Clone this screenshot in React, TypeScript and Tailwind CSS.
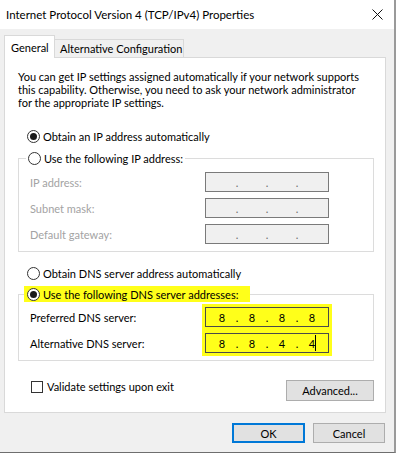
import React from "react";

function Radio({ checked }: { checked?: boolean }) {
  return (
    <span className="flex h-[13px] w-[13px] shrink-0 items-center justify-center rounded-full border border-[#333333] bg-white">
      {checked && <span className="h-[7px] w-[7px] rounded-full bg-[#1a1a1a]" />}
    </span>
  );
}

function IpBox({ values, disabled, caret }: { values?: string[]; disabled?: boolean; caret?: boolean }) {
  const cells = values ?? ["", "", "", ""];
  return (
    <div
      className={
        "relative flex h-[20px] w-[124px] items-center border px-px " +
        (disabled ? "border-[#7a7a7a] bg-[#f0f0f0] text-[#6d6d6d]" : "border-[#4a4a4a] bg-[#ffff1a] text-black")
      }
    >
      {cells.map((v, i) => (
        <React.Fragment key={i}>
          {i > 0 && <span className="flex w-0 justify-center">.</span>}
          <span className="w-[30px] text-center">{v}</span>
        </React.Fragment>
      ))}
      {caret && <span className="absolute right-[12px] top-[1px] h-[16px] w-px bg-black" />}
    </div>
  );
}

function Row({ label, disabled, children }: { label: string; disabled?: boolean; children: React.ReactNode }) {
  return (
    <div className="flex h-[20px] items-center justify-between pl-[11px] pr-[44px]">
      <span className={disabled ? "text-[#a3a3a3]" : "text-black"}>{label}</span>
      {children}
    </div>
  );
}

export default function App() {
  return (
    <div
      className="h-[455px] w-[398px] overflow-hidden whitespace-nowrap bg-white text-[11px] leading-[13px] text-black"
      style={{ fontFamily: 'Lato, "Noto Sans", sans-serif' }}
    >
      <div className="flex h-[453px] w-[396px] flex-col border-b border-r-2 border-[#6e6e6e] border-r-[#9a9a9a] bg-[#f0f0f0]">
        {/* title bar */}
        <div className="flex h-[29px] shrink-0 items-center justify-between bg-white pl-[6px] pr-[9px]">
          <span className="text-[11.5px]">Internet Protocol Version 4 (TCP/IPv4) Properties</span>
          <svg width="11" height="11" viewBox="0 0 11 11" className="mr-[2px]">
            <path d="M0.5 0.5 L10.5 10.5 M10.5 0.5 L0.5 10.5" stroke="#111" strokeWidth="1" />
          </svg>
        </div>

        <div className="pl-[4px] pr-[8px] pt-[6px]">
          {/* tabs */}
          <div className="flex items-end">
            <div className="relative -mb-px flex h-[23px] w-[51px] items-center border border-b-0 border-[#d9d9d9] bg-white pl-[6px]">
              General
            </div>
            <div className="flex h-[18px] w-[129px] items-center border border-b-0 border-l-0 border-[#d9d9d9] bg-[#f0f0f0] pl-[5px]">
              Alternative Configuration
            </div>
          </div>

          {/* panel */}
          <div className="h-[356px] w-[382px] border border-[#d9d9d9] bg-white pl-[13px] pr-[11px] pt-[12px]">
            <p>
              You can get IP settings assigned automatically if your network supports
              <br />
              this capability. Otherwise, you need to ask your network administrator
              <br />
              for the appropriate IP settings.
            </p>

            <div className="mt-[19px] flex h-[16px] items-center gap-[3px] pl-[9px]">
              <Radio checked />
              <span>Obtain an IP address automatically</span>
            </div>

            <fieldset className="mt-[6px] border border-[#dcdcdc] pb-[7px]">
              <legend className="ml-[7px] flex h-[16px] items-center gap-[3px] px-[2px]">
                <Radio />
                <span>Use the following IP address:</span>
              </legend>
              <div className="mt-[6px] flex flex-col gap-[6px]">
                <Row label="IP address:" disabled>
                  <IpBox disabled />
                </Row>
                <Row label="Subnet mask:" disabled>
                  <IpBox disabled />
                </Row>
                <Row label="Default gateway:" disabled>
                  <IpBox disabled />
                </Row>
              </div>
            </fieldset>

            <div className="mt-[13px] flex h-[16px] items-center gap-[3px] pl-[9px]">
              <Radio />
              <span>Obtain DNS server address automatically</span>
            </div>

            <fieldset className="mt-[5px] border border-[#dcdcdc] pb-[7px]">
              <legend className="ml-[5px] flex h-[16px] items-center gap-[3px] bg-[#ffff1a] pl-[3px] pr-[12px]">
                <Radio checked />
                <span>Use the following DNS server addresses:</span>
              </legend>
              <div className="mt-[5px] flex flex-col gap-[6px]">
                <Row label="Preferred DNS server:">
                  <div className="-m-[3px] bg-[#ffff1a] p-[3px]">
                    <IpBox values={["8", "8", "8", "8"]} />
                  </div>
                </Row>
                <Row label="Alternative DNS server:">
                  <div className="-m-[3px] bg-[#ffff1a] p-[3px]">
                    <IpBox values={["8", "8", "4", "4"]} caret />
                  </div>
                </Row>
              </div>
            </fieldset>

            <div className="mt-[19px] flex items-start justify-between">
              <div className="flex items-center gap-[4px] pl-[13px]">
                <span className="h-[12px] w-[12px] border border-[#333333] bg-white" />
                <span>Validate settings upon exit</span>
              </div>
              <button className="h-[21px] w-[88px] border border-[#adadad] bg-[#e1e1e1]">Advanced...</button>
            </div>
          </div>

          {/* dialog buttons */}
          <div className="mt-[10px] flex justify-end gap-[8px] pr-[1px]">
            <button className="h-[20px] w-[73px] border-2 border-[#0078d7] bg-[#e1e1e1]">OK</button>
            <button className="h-[20px] w-[72px] border border-[#adadad] bg-[#e1e1e1]">Cancel</button>
          </div>
        </div>
      </div>
    </div>
  );
}
